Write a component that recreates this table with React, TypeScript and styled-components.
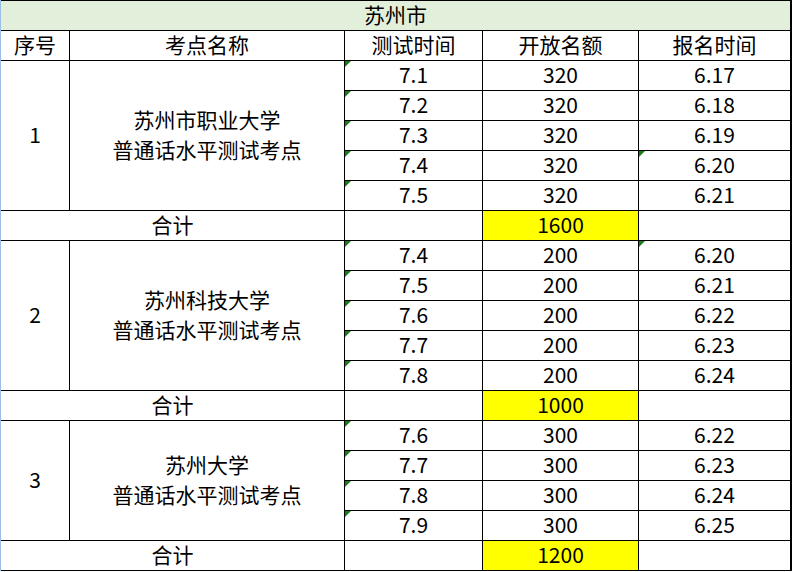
import React from 'react';
import styled, { createGlobalStyle, css } from 'styled-components';

const GlobalStyle = createGlobalStyle`
  html, body {
    margin: 0;
    padding: 0;
    background: #ffffff;
  }
  body {
    font-family: "Noto Sans CJK SC", "Microsoft YaHei", sans-serif;
  }
`

const Sheet = styled.div`
  display: grid;
  grid-template-columns: 68px 274px 137px 155px 151px;
  grid-auto-rows: 29px;
  gap: 1px;
  width: 790px;
  padding: 1px 1px 1px 0;
  border-left: 1px solid #9bbfe4;
  background: #000000;
  font-size: 21px;
  color: #000000;
`

const Cell = styled.div<{ $cols?: number; $rows?: number; $tone?: 'title' | 'sum'; $flag?: boolean }>`
  position: relative;
  box-sizing: border-box;
  display: flex;
  flex-direction: column;
  align-items: center;
  justify-content: center;
  padding-bottom: 4px;
  background: #ffffff;
  line-height: 30px;
  white-space: nowrap;
  grid-column: span ${p => p.$cols ?? 1};
  grid-row: span ${p => p.$rows ?? 1};
  ${p => p.$tone === 'title' && css`background: #e2efda;`}
  ${p => p.$tone === 'sum' && css`background: #ffff00;`}
  ${p => p.$flag && css`
    &::before {
      content: '';
      position: absolute;
      left: 0;
      top: 0;
      border-top: 6px solid #1a7d1a;
      border-right: 6px solid transparent;
    }
  `}
`

type Row = { test: string; seats: string; signup: string; flag?: boolean }

type Site = { no: string; name: string; total: string; rows: Row[] }

const sites: Site[] = [
  {
    no: '1',
    name: '苏州市职业大学',
    total: '1600',
    rows: [
      { test: '7.1', seats: '320', signup: '6.17' },
      { test: '7.2', seats: '320', signup: '6.18' },
      { test: '7.3', seats: '320', signup: '6.19' },
      { test: '7.4', seats: '320', signup: '6.20', flag: true },
      { test: '7.5', seats: '320', signup: '6.21' },
    ],
  },
  {
    no: '2',
    name: '苏州科技大学',
    total: '1000',
    rows: [
      { test: '7.4', seats: '200', signup: '6.20', flag: true },
      { test: '7.5', seats: '200', signup: '6.21' },
      { test: '7.6', seats: '200', signup: '6.22' },
      { test: '7.7', seats: '200', signup: '6.23' },
      { test: '7.8', seats: '200', signup: '6.24' },
    ],
  },
  {
    no: '3',
    name: '苏州大学',
    total: '1200',
    rows: [
      { test: '7.6', seats: '300', signup: '6.22' },
      { test: '7.7', seats: '300', signup: '6.23' },
      { test: '7.8', seats: '300', signup: '6.24' },
      { test: '7.9', seats: '300', signup: '6.25' },
    ],
  },
]

export default function App() {
  return <>
    <GlobalStyle />
    <Sheet>
      <Cell $cols={5} $tone="title">苏州市</Cell>
      <Cell>序号</Cell>
      <Cell>考点名称</Cell>
      <Cell>测试时间</Cell>
      <Cell>开放名额</Cell>
      <Cell>报名时间</Cell>
      {sites.map(site => (
        <React.Fragment key={site.no}>
          <Cell $rows={site.rows.length}>{site.no}</Cell>
          <Cell $rows={site.rows.length}>
            <span>{site.name}</span>
            <span>普通话水平测试考点</span>
          </Cell>
          {site.rows.map((r, i) => (
            <React.Fragment key={i}>
              <Cell $flag>{r.test}</Cell>
              <Cell>{r.seats}</Cell>
              <Cell $flag={r.flag}>{r.signup}</Cell>
            </React.Fragment>
          ))}
          <Cell $cols={2}>合计</Cell>
          <Cell />
          <Cell $tone="sum">{site.total}</Cell>
          <Cell />
        </React.Fragment>
      ))}
    </Sheet>
  </>
}
